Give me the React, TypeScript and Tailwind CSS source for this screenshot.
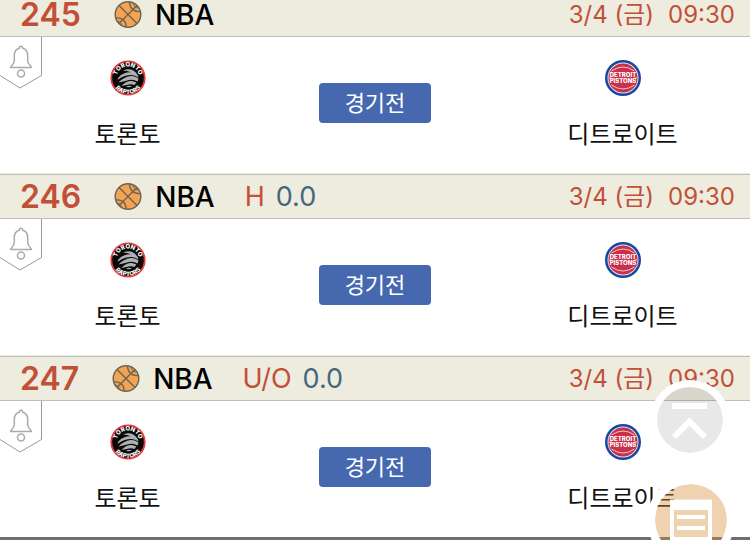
import React from "react";

type Market = { label: string; value: string };
type Game = { id: number; league: string; market?: Market; date: string; time: string; home: string; away: string; status: string };

const games: Game[] = [
  { id: 245, league: "NBA", date: "3/4 (금)", time: "09:30", home: "토론토", away: "디트로이트", status: "경기전" },
  { id: 246, league: "NBA", market: { label: "H", value: "0.0" }, date: "3/4 (금)", time: "09:30", home: "토론토", away: "디트로이트", status: "경기전" },
  { id: 247, league: "NBA", market: { label: "U/O", value: "0.0" }, date: "3/4 (금)", time: "09:30", home: "토론토", away: "디트로이트", status: "경기전" },
];

function Basketball() {
  return (
    <svg className="size-7 shrink-0" viewBox="0 0 28 28" fill="none" stroke="#6b6456" strokeWidth="1.4" aria-hidden="true">
      <circle cx="14" cy="13.500" r="12.800" fill="#f3a452" />
      <path d="M5 4.500l18 18M23 4.500L5 22.500" />
      <path d="M15.500 1C15.500 7 20 11.500 26.500 10.500M1.500 17C7.500 16 12.500 20 12 26" />
      <path d="M19.500 2.500q0 4 5 4.500M2.500 20q4 0 5 4.500" strokeWidth="1" />
    </svg>
  );
}

function RaptorsLogo() {
  return (
    <svg className="size-9" viewBox="0 0 36 36" role="img" aria-label="Toronto Raptors">
      <defs>
        <path id="raptors-top" d="M6.500 18a11.500 11.500 0 0 1 23 0" />
        <path id="raptors-bottom" d="M2 18a16 16 0 0 0 32 0" />
      </defs>
      <circle cx="18" cy="18" r="16.700" fill="#080808" stroke="#e8383c" strokeWidth="1.800" />
      <g fill="#aeb0b2">
        <path d="M13 10.500q7-2.500 11 .5 4 3 4.500 6.500-3.500-3-8.500-2.500-7 .5-12.500 5 .5-4 6.500-6.500 3-1.500 7-1.200-4-1.800-8-1.800z" />
        <path d="M8.500 22.500q5-5.500 12-6.500 5-.5 8 2.500-.5 2-1 3-4-2.500-8.500-1.500t-10.500 2.500z" />
        <path d="M11.500 26q4-4.500 8.500-5 3.500-.5 6.300 1.500-1 1.500-2 2.500-2.500-1-5.500-.5t-7.300 1.500z" />
        <path d="M16 27q2.500-1.800 6-.8-2 1.300-6 .8z" />
      </g>
      <g fill="#fff" className="font-['Inter',sans-serif] text-[6px] font-extrabold">
        <text textAnchor="middle"><textPath href="#raptors-top" startOffset="50%">TORONTO</textPath></text>
        <text textAnchor="middle"><textPath href="#raptors-bottom" startOffset="50%">RAPTORS</textPath></text>
      </g>
    </svg>
  );
}

function PistonsLogo() {
  return (
    <svg className="size-9" viewBox="0 0 36 36" role="img" aria-label="Detroit Pistons">
      <circle cx="18" cy="18" r="18" fill="#1747a5" />
      <circle cx="18" cy="18" r="15.500" fill="#e5e3ea" />
      <circle cx="18" cy="18" r="14.600" fill="#c9304a" />
      <path d="M6.500 11Q18 3 29.500 11M6.500 25Q18 33 29.500 25M3.500 18h3M29.500 18h3" stroke="#f2c8d0" strokeWidth="1" fill="none" />
      <g fill="#fff" textAnchor="middle" className="font-['Inter',sans-serif] text-[6px] font-extrabold">
        <text x="18" y="17">DETROIT</text>
        <text x="18" y="23">PISTONS</text>
      </g>
    </svg>
  );
}

function AlarmTag() {
  return (
    <button type="button" aria-label="알림" className="absolute top-0 left-0">
      <svg width="43" height="53" viewBox="0 0 43 53" fill="none">
        <path d="M41.500 0v38.500L20 51 0 38.500" stroke="#999" strokeWidth="1" />
        <g stroke="#aaa" strokeWidth="1.500">
          <path d="M10.500 30.500c0-2 3.800-2.500 3.800-7v-5c0-4 2.500-6.500 5-7.200 0-2.600 3.400-2.600 3.400 0 2.500.7 5 3.200 5 7.200v5c0 4.500 3.800 5 3.800 7z" strokeLinejoin="round" />
          <circle cx="21" cy="36.500" r="3.500" />
        </g>
      </svg>
    </button>
  );
}

function Team({ name, children }: { name: string; children: React.ReactNode }) {
  return (
    <div className="flex flex-col items-center gap-[23px] pt-[23px]">
      {children}
      <span className="text-2xl leading-8 text-[#111]">{name}</span>
    </div>
  );
}

function GameRow({ game }: { game: Game }) {
  return (
    <article>
      <header className="flex h-[45px] items-center border-y border-[#bdbebd] bg-[#eeecdf] pr-[15px] pl-5">
        <span className="text-[32px] leading-8 font-semibold text-[#c25036]">{game.id}</span>
        <div className="ml-[33px] flex items-center gap-[13px]">
          <Basketball />
          <span className="text-[28px] leading-8 font-medium text-black">{game.league}</span>
        </div>
        {game.market && (
          <div className="ml-[30px] flex gap-[11px] text-[27px] leading-8">
            <span className="text-[#c25036]">{game.market.label}</span>
            <span className="text-[#44677c]">{game.market.value}</span>
          </div>
        )}
        <div className="ml-auto flex gap-3.5 text-2xl leading-8 text-[#c25036]">
          <span>{game.date}</span>
          <time>{game.time}</time>
        </div>
      </header>
      <div className="relative grid h-[137px] grid-cols-[34%_32%_34%] border-b border-[#eeecdf] bg-white">
        <AlarmTag />
        <Team name={game.home}><RaptorsLogo /></Team>
        <div className="flex items-start justify-center pt-[46px]">
          <button type="button" className="h-10 w-28 rounded-sm bg-[#4668af] text-[22px] leading-10 text-white">{game.status}</button>
        </div>
        <Team name={game.away}><PistonsLogo /></Team>
      </div>
    </article>
  );
}

export default function App() {
  return (
    <div className="relative h-screen overflow-hidden bg-white font-['Inter','Noto_Sans_CJK_KR',sans-serif]">
      <main className="-mt-2">
        {games.map((game) => <GameRow key={game.id} game={game} />)}
      </main>
      <div className="absolute inset-x-0 bottom-0 h-[3px] bg-[#6e6e6e]" />
      <button type="button" aria-label="맨 위로" className="absolute right-5 bottom-20 size-20 rounded-full border-[7px] border-white bg-black/9 bg-clip-padding">
        <svg className="size-full" viewBox="0 0 66 66" fill="none" stroke="#fff">
          <path d="M15 19h35" strokeWidth="6" />
          <path d="M17 50l15.500-15.500L48 50" strokeWidth="6" />
        </svg>
      </button>
      <button type="button" aria-label="경기 목록" className="absolute right-[15px] -bottom-6 size-[88px] rounded-full border-8 border-white bg-[#d79139]/40 bg-clip-padding">
        <svg className="size-full" viewBox="0 0 72 72" fill="#fff">
          <path fillRule="evenodd" d="M15 15.500h42V58H15zM19 26v27h34V26z" />
          <path d="M22 31h28v4H22zM22 42h28v4H22z" />
        </svg>
      </button>
    </div>
  );
}
